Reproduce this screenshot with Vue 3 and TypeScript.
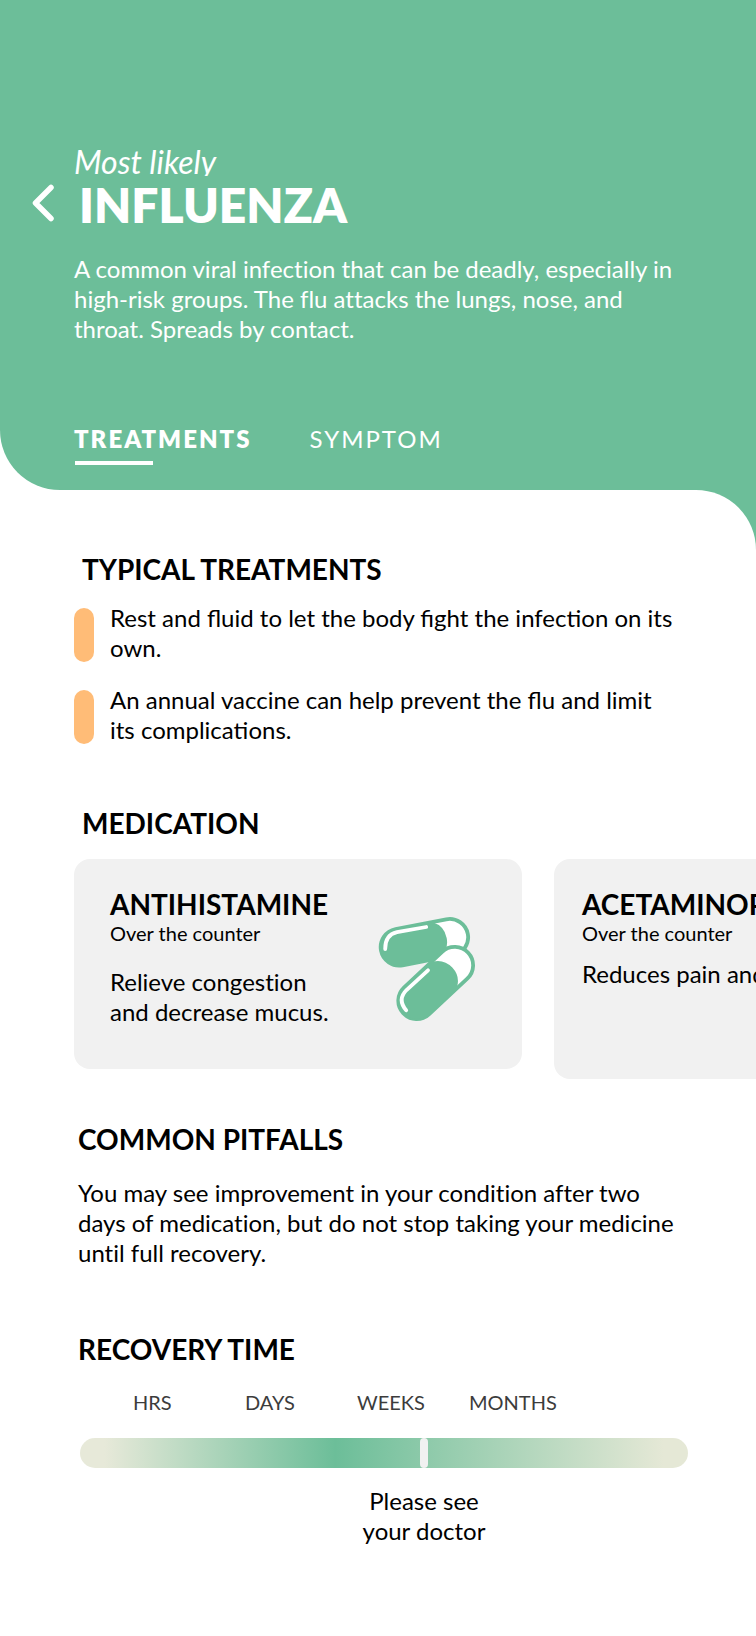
<script setup lang="ts">
import { ref } from 'vue'

interface Medication {
  name: string
  availability: string
  description: string
}

const tabs: string[] = ['TREATMENTS', 'SYMPTOM']
const activeTab = ref<string>('TREATMENTS')

const treatments: string[] = [
  'Rest and fluid to let the body fight the infection on its own.',
  'An annual vaccine can help prevent the flu and limit its complications.',
]

const antihistamine: Medication = {
  name: 'ANTIHISTAMINE',
  availability: 'Over the counter',
  description: 'Relieve congestion and decrease mucus.',
}

const acetaminophen: Medication = {
  name: 'ACETAMINOPHEN',
  availability: 'Over the counter',
  description: 'Reduces pain and fever.',
}

const periods: string[] = ['HRS', 'DAYS', 'WEEKS', 'MONTHS']
const doctorMark = 56
</script>

<template>
  <div class="page">
    <div class="header-wrap">
      <header class="header">
        <p class="likelihood">Most likely</p>
        <div class="title-row">
          <button class="back" type="button" aria-label="Back">
            <svg width="24" height="40" viewBox="0 0 24 40" fill="none" aria-hidden="true">
              <path d="M20 4.5 4.5 20 20 35.5" stroke="#fff" stroke-width="5.5" stroke-linecap="round" stroke-linejoin="round" />
            </svg>
          </button>
          <h1>INFLUENZA</h1>
        </div>
        <p class="summary">
          A common viral infection that can be deadly, especially in high-risk groups. The flu attacks the lungs, nose, and throat. Spreads by contact.
        </p>
        <nav class="tabs">
          <button
            v-for="tab in tabs"
            :key="tab"
            type="button"
            class="tab"
            :class="{ active: tab === activeTab }"
            @click="activeTab = tab"
          >
            {{ tab }}
          </button>
        </nav>
      </header>
    </div>

    <div class="main-wrap">
      <main class="main">
        <section class="treatments">
          <h2>TYPICAL TREATMENTS</h2>
          <ul>
            <li v-for="item in treatments" :key="item">{{ item }}</li>
          </ul>
        </section>

        <section class="medication">
          <h2>MEDICATION</h2>
          <div class="cards">
            <article class="card first">
              <div class="card-text">
                <h3>{{ antihistamine.name }}</h3>
                <p class="availability">{{ antihistamine.availability }}</p>
                <p class="use">{{ antihistamine.description }}</p>
              </div>
              <svg class="pills" width="98" height="148" viewBox="17 -2 98 148" fill="none" aria-hidden="true">
                <g transform="translate(63.4 53.3) rotate(-11)">
                  <rect x="-44.2" y="-18.4" width="88.4" height="36.8" rx="18.4" fill="#fff" stroke="#6cbe99" stroke-width="3.8" />
                  <path d="M-26-18H12A20.5 20.5 0 0 1 12 18H-26A18 18 0 0 1-26-18Z" fill="#6cbe99" />
                </g>
                <path d="M65.2 38 36 43.2Q24 46 24.2 60" stroke="#fff" stroke-width="3.8" stroke-linecap="round" />
                <g transform="translate(74.7 94) rotate(-43)">
                  <rect x="-44.4" y="-18.4" width="88.8" height="36.8" rx="18.4" fill="#fff" stroke="#6cbe99" stroke-width="3.8" />
                  <path d="M-26-18H12A20.5 20.5 0 0 1 12 18H-26A18 18 0 0 1-26-18Z" fill="#6cbe99" />
                </g>
                <path d="M67 81.3 45.5 101Q36 110.500 45.2 121.300" stroke="#fff" stroke-width="3.8" stroke-linecap="round" />
              </svg>
            </article>
            <article class="card second">
              <div class="card-text">
                <h3>{{ acetaminophen.name }}</h3>
                <p class="availability">{{ acetaminophen.availability }}</p>
                <p class="use">{{ acetaminophen.description }}</p>
              </div>
            </article>
          </div>
        </section>

        <section class="pitfalls">
          <h2>COMMON PITFALLS</h2>
          <p>
            You may see improvement in your condition after two days of medication, but do not stop taking your medicine until full recovery.
          </p>
        </section>

        <section class="recovery">
          <h2>RECOVERY TIME</h2>
          <div class="periods">
            <span v-for="period in periods" :key="period">{{ period }}</span>
          </div>
          <div class="timeline">
            <div class="track">
              <span class="mark" :style="{ left: doctorMark + '%' }"></span>
            </div>
            <p class="advice">Please see<br />your doctor</p>
          </div>
        </section>
      </main>
    </div>
  </div>
</template>

<style>
body {
  margin: 0;
  background: #fff;
}
</style>

<style scoped>
.page {
  font-family: Lato, "Liberation Sans", sans-serif;
  font-size: 24px;
  line-height: 30px;
  color: #000;
  font-variant-ligatures: none;
  overflow: hidden;
}

h1,
h2,
h3,
p,
ul {
  margin: 0;
  padding: 0;
}

button {
  padding: 0;
  border: 0;
  background: none;
  color: inherit;
  font: inherit;
  cursor: pointer;
}

.header-wrap {
  background: #fff;
}

.header {
  padding: 146px 72px 25px 74px;
  background: #6cbe99;
  border-bottom-left-radius: 60px;
  color: #fff;
}

.likelihood {
  height: 30px;
  overflow: hidden;
  font-size: 32px;
  line-height: 32px;
  font-style: italic;
}

.title-row {
  display: flex;
  align-items: flex-start;
  gap: 24px;
  margin-left: -43px;
}

.back {
  display: flex;
  padding-top: 7px;
}

h1 {
  font-size: 48px;
  line-height: 58px;
  font-weight: 800;
}

.summary {
  margin-top: 20px;
}

.tabs {
  display: flex;
  gap: 58px;
  margin-top: 80px;
}

.tab {
  padding-bottom: 11px;
  letter-spacing: 2px;
}

.tab.active {
  font-weight: 800;
  background: linear-gradient(#fff, #fff) 1px bottom / 78px 4px no-repeat;
}

.main-wrap {
  background: #6cbe99;
}

.main {
  padding: 62px 0 80px;
  background: #fff;
  border-top-right-radius: 60px;
}

h2,
h3 {
  font-size: 28px;
  line-height: 34px;
  font-weight: 700;
}

.treatments {
  padding: 0 76px 0 74px;
}

.treatments h2 {
  padding-left: 8px;
}

.treatments ul {
  display: flex;
  flex-direction: column;
  gap: 22px;
  margin-top: 17px;
  list-style: none;
  font-variant-ligatures: normal;
}

.treatments li {
  display: flex;
  align-items: center;
  gap: 16px;
}

.treatments li::before {
  content: "";
  flex: none;
  width: 20px;
  height: 54px;
  margin-top: 4px;
  border-radius: 10px;
  background: #ffbc77;
}

.medication {
  margin-top: 61px;
}

.medication h2 {
  padding-left: 82px;
}

.cards {
  display: flex;
  align-items: flex-start;
  gap: 32px;
  margin-top: 19px;
  padding-left: 74px;
  overflow: hidden;
}

.card {
  box-sizing: border-box;
  display: flex;
  flex: none;
  justify-content: space-between;
  width: 448px;
  padding: 28px 46px 28px 36px;
  border-radius: 16px;
  background: #f1f1f1;
}

.card.first {
  min-height: 210px;
}

.card.second {
  min-height: 220px;
  padding-left: 28px;
}

.first .card-text {
  width: 232px;
}

.availability {
  font-size: 20px;
  line-height: 24px;
}

.first .use {
  margin-top: 22px;
}

.second .use {
  margin-top: 14px;
}

.pitfalls {
  margin-top: 43px;
  padding: 0 72px 0 78px;
}

.pitfalls p {
  margin-top: 22px;
}

.recovery {
  margin-top: 64px;
  padding: 0 68px 0 78px;
}

.periods {
  display: grid;
  grid-template-columns: repeat(4, 112px);
  margin-top: 24px;
  padding-left: 55px;
  font-size: 20px;
  line-height: 24px;
  color: #3c3c3c;
}

.timeline {
  margin-top: 24px;
  padding-left: 2px;
}

.track {
  position: relative;
  height: 30px;
  border-radius: 15px;
  background: linear-gradient(90deg, #e7e9d9 4%, #6cbe99 42%, #e5e8d6 96%);
}

.mark {
  position: absolute;
  top: 0;
  width: 8px;
  height: 30px;
  border-radius: 4px;
  background: #f1f1f1;
}

.advice {
  margin-top: 18px;
  padding-left: 80px;
  text-align: center;
}
</style>
